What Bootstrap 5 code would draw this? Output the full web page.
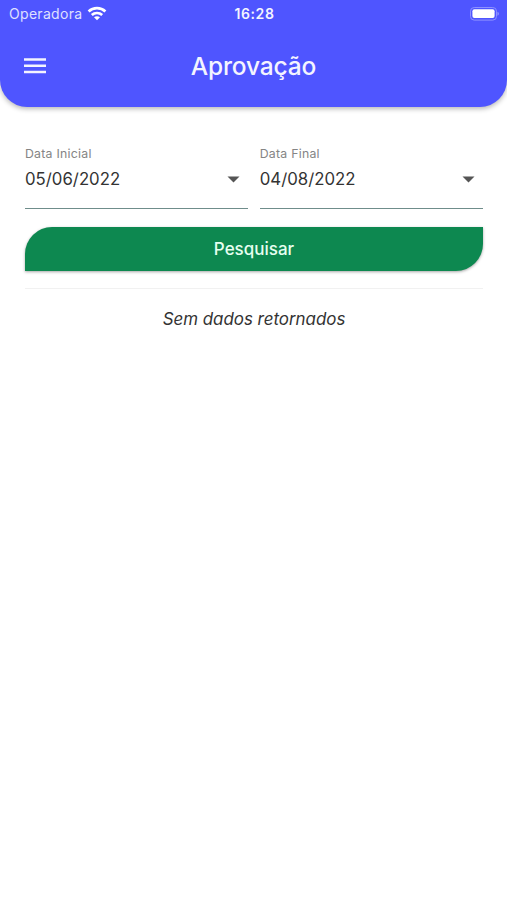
<!DOCTYPE html>
<html lang="pt-BR">
<head>
<meta charset="utf-8">
<meta name="viewport" content="width=device-width, initial-scale=1">
<title>Aprovação</title>
<link href="https://cdn.jsdelivr.net/npm/bootstrap@5.3.0/dist/css/bootstrap.min.css" rel="stylesheet">
<style>
body{font-family:Inter,"Liberation Sans",sans-serif;background:#fff;color:#333;min-height:900px}
.app-header{height:107px;background:#4f55ff;color:#f4f4ff;border-radius:0 0 27px 27px;box-shadow:0 2px 5px rgba(0,0,0,.28)}
.status-bar{height:27px;padding:0 7px 0 9px;font-size:14px;line-height:27px}
.status-bar>div,.title-bar>div{flex:1 1 0}
.carrier{letter-spacing:.3px;color:#dfe0ff}
.clock{font-size:14px;font-weight:600;letter-spacing:.6px}
.title-bar{height:78px;padding:0 24px}
.title-bar h1{font-size:24.5px;font-weight:500;line-height:30px;letter-spacing:-.15px;padding-bottom:1px}
.menu-btn{line-height:0;color:inherit;display:block}
.content{padding:39px 24px 0 25px}
.date-field{height:63px;border-bottom:1px solid #6f8d8b;color:#333}
.date-field label{font-size:12.3px;line-height:16px;color:#858585;letter-spacing:.25px}
.date-value{font-size:16.8px;line-height:26px;padding-top:4px}
.fields{gap:12px}
.search-btn{height:44px;margin-top:18.4px;padding-top:1px;background:#0d8850;color:#e6fff0;font-size:17px;font-weight:550;border-radius:27px 0 27px 0;box-shadow:0 1px 3px rgba(0,0,0,.35)}
.search-btn:hover{background:#0b7746;color:#fff}
.divider{height:1px;margin:17px 0 16.6px;background:#f1f1f1}
.empty-text{font-size:16.9px;line-height:26px;color:#333}
</style>
<script src="https://cdn.jsdelivr.net/npm/bootstrap@5.3.0/dist/js/bootstrap.bundle.min.js"></script>
</head>
<body>
<header class="app-header">
  <div class="status-bar d-flex align-items-center">
    <div class="d-flex align-items-center"><span class="carrier">Operadora</span>
      <svg class="ms-1" width="21" height="16" viewBox="-1 0 21 16" fill="none" stroke="#fff" stroke-width="2.7"><path d="M1.6 5.4C6.3 .9 13.7.9 18.4 5.4"/><path d="M4.8 9c2.9-2.7 7.5-2.7 10.4 0"/><path d="M10 14.2 7 11.3c1.7-1.5 4.3-1.5 6 0z" fill="#fff" stroke="none"/></svg>
    </div>
    <span class="clock">16:28</span>
    <div class="d-flex justify-content-end">
      <svg width="30" height="14" viewBox="0 0 30 14"><rect x=".5" y=".5" width="26" height="12.6" rx="3.7" fill="none" stroke="#8d91ff"/><rect x="2.4" y="2.2" width="22.2" height="8.8" rx="2" fill="#fff"/><path d="M27.5 4.8v4c1.8-.7 1.8-3.3 0-4z" fill="#9a9dff"/></svg>
    </div>
  </div>
  <div class="title-bar d-flex align-items-center">
    <div><button class="btn p-0 border-0 menu-btn" aria-label="Menu"><svg width="22" height="16" viewBox="0 0 22 16" fill="currentColor"><path d="M0 .3h22v2.5H0zM0 6.6h22v2.5H0zM0 12.8h22v2.5H0z"/></svg></button></div>
    <h1 class="mb-0">Aprovação</h1>
    <div></div>
  </div>
</header>
<main class="content">
  <div class="fields d-flex">
    <div class="date-field flex-fill">
      <label class="d-block">Data Inicial</label>
      <div class="date-value d-flex justify-content-between pe-2"><span>05/06/2022</span>
        <svg width="13" height="24" viewBox="0 0 13 24" fill="#555"><path d="M.5 10.5h12l-6 6z"/></svg></div>
    </div>
    <div class="date-field flex-fill">
      <label class="d-block">Data Final</label>
      <div class="date-value d-flex justify-content-between pe-2"><span>04/08/2022</span>
        <svg width="13" height="24" viewBox="0 0 13 24" fill="#555"><path d="M.5 10.5h12l-6 6z"/></svg></div>
    </div>
  </div>
  <button class="btn w-100 border-0 px-0 pb-0 d-block search-btn">Pesquisar</button>
  <div class="divider"></div>
  <p class="empty-text text-center fst-italic mb-0">Sem dados retornados</p>
</main>
</body>
</html>
